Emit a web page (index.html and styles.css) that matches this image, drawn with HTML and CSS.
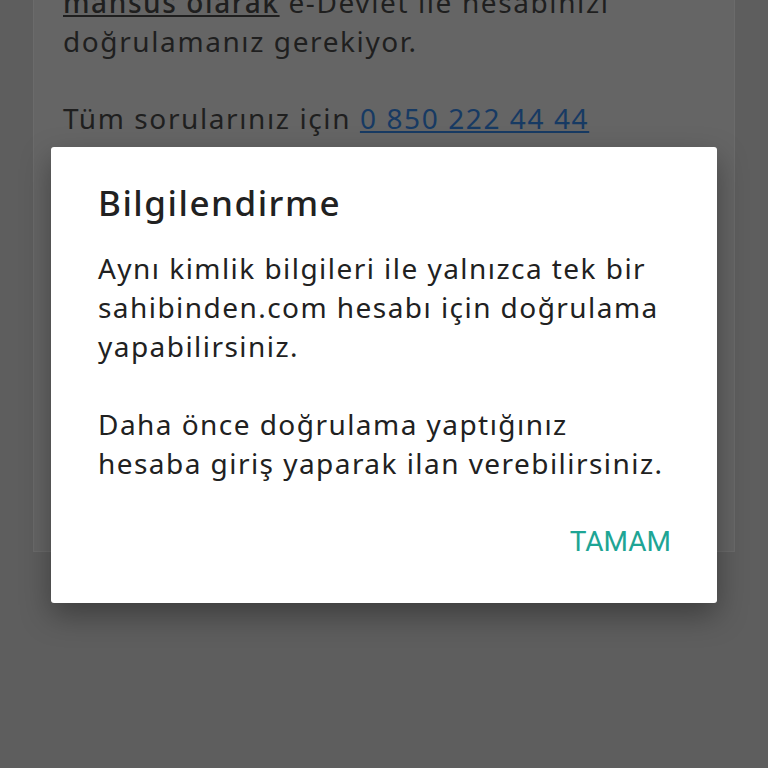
FILE: index.html
```html
<!DOCTYPE html>
<html lang="tr">
<head>
    <meta charset="UTF-8">
    <meta name="viewport" content="width=device-width, initial-scale=1.0">
    <title>Bilgilendirme</title>
    <link rel="stylesheet" href="styles.css">
</head>
<body>
    <div class="page">
        <div class="card">
            <p><a class="under">mahsus olarak</a> e-Devlet ile hesabınızı doğrulamanız gerekiyor.</p>
            <p>Tüm sorularınız için <a class="phone">0 850 222 44 44</a></p>
        </div>
    </div>

    <div class="dialog">
        <h2>Bilgilendirme</h2>
        <p>Aynı kimlik bilgileri ile yalnızca tek bir sahibinden.com hesabı için doğrulama yapabilirsiniz.</p>
        <p>Daha önce doğrulama yaptığınız hesaba giriş yaparak ilan verebilirsiniz.</p>
        <div class="actions">
            <button>TAMAM</button>
        </div>
    </div>
</body>
</html>
```

FILE: styles.css
```css
html, body {
    margin: 0;
    height: 100%;
}
body {
    background-color: #5e5e5e;
    font-family: "Noto Sans", Roboto, sans-serif;
    overflow: hidden;
}
.page {
    padding: 0 33px;
}
.card {
    background-color: #656565;
    border: 1px solid #6b6b6b;
    border-top: none;
    height: 569px;
    margin-top: -17px;
    padding: 0 29px;
    box-sizing: border-box;
    color: #1f1f1f;
    font-size: 28px;
    line-height: 38.5px;
    letter-spacing: 1.6px;
}
.card p {
    margin: 0 0 38.5px;
}
.under {
    color: #1f1f1f;
    font-weight: 500;
    text-decoration: underline;
}
.phone {
    color: #173a63;
    text-decoration: underline;
}
.dialog {
    position: absolute;
    left: 51px;
    top: 147px;
    width: 666px;
    height: 456px;
    box-sizing: border-box;
    padding: 34px 46px 0 47px;
    background-color: #fff;
    border-radius: 3px;
    box-shadow: 0 12px 30px rgba(0, 0, 0, 0.35);
    color: #212121;
}
.dialog h2 {
    margin: 0 0 24px;
    font-size: 35px;
    font-weight: 500;
    line-height: 44px;
    letter-spacing: 1.5px;
}
.dialog p {
    margin: 0 0 39px;
    font-size: 28px;
    line-height: 39px;
    letter-spacing: 1.45px;
}
.actions {
    display: flex;
    justify-content: flex-end;
}
.actions button {
    background: none;
    border: none;
    padding: 0;
    font-family: Roboto, sans-serif;
    font-size: 28px;
    color: #1ea595;
    line-height: 40px;
}
```
